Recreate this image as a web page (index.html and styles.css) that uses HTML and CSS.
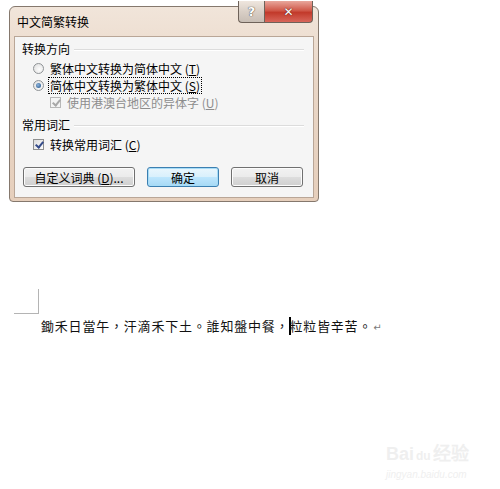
FILE: index.html
```html
<!DOCTYPE html>
<html lang="zh-CN">
<head>
  <meta charset="UTF-8" />
  <title>中文简繁转换</title>
  <link rel="stylesheet" href="styles.css">
</head>
<body>
  <div class="dialog">
    <div class="titlebar">
      <span class="title">中文简繁转换</span>
      <div class="caption-btns">
        <span class="cap-help">?</span>
        <span class="cap-close">✕</span>
      </div>
    </div>
    <div class="panel">
      <div class="group-head"><span>转换方向</span><i class="group-line"></i></div>
      <div class="row indent">
        <span class="radio"></span>
        <span class="label">繁体中文转换为简体中文 (<u>T</u>)</span>
      </div>
      <div class="row indent">
        <span class="radio on"></span>
        <span class="label focus">简体中文转换为繁体中文 (<u>S</u>)</span>
      </div>
      <div class="row indent2 disabled">
        <span class="check off"></span>
        <span class="label">使用港澳台地区的异体字 (<u>U</u>)</span>
      </div>
      <div class="group-head second"><span>常用词汇</span><i class="group-line"></i></div>
      <div class="row indent">
        <span class="check"></span>
        <span class="label">转换常用词汇 (<u>C</u>)</span>
      </div>
      <div class="buttons">
        <button class="btn wide">自定义词典 (<u>D</u>)...</button>
        <button class="btn default">确定</button>
        <button class="btn">取消</button>
      </div>
    </div>
  </div>

  <div class="doc">
    <div class="corner"></div>
    <p class="line" lang="zh-Hant-TW">鋤禾日當午，汗滴禾下土。誰知盤中餐，<span class="caret"></span>粒粒皆辛苦。<span class="para">↵</span></p>
  </div>

  <div class="watermark">
    <div class="wm-logo">Bai<span class="wm-paw">du</span>经验</div>
    <div class="wm-url">jingyan.baidu.com</div>
  </div>
</body>
</html>
```

FILE: styles.css
```css
body {
  margin: 0;
  background: #ffffff;
  font-family: "Noto Sans CJK SC", "Noto Sans", sans-serif;
  font-size: 12px;
  color: #000;
  position: relative;
  height: 489px;
  overflow: hidden;
}
.dialog {
  width: 310px;
  height: 196px;
  margin: 6px 0 0 9px;
  padding: 0 4px 3px 4px;
  box-sizing: border-box;
  background: linear-gradient(#f1e5da, #e9d6c6 40%, #e6cfbc);
  border: 1px solid #85786d;
  border-radius: 6px 6px 4px 4px;
  display: flex;
  flex-direction: column;
}
.titlebar {
  height: 29px;
  display: flex;
  justify-content: space-between;
  align-items: flex-start;
}
.title {
  margin: 8px 0 0 3px;
  line-height: 14px;
}
.caption-btns {
  display: flex;
  margin: -6px 1px 0 0;
}
.cap-help, .cap-close {
  height: 22px;
  box-sizing: border-box;
  border: 1px solid #6e6259;
  border-top: none;
  display: flex;
  align-items: center;
  justify-content: center;
  font-family: "DejaVu Sans", sans-serif;
  font-weight: bold;
}
.cap-help {
  width: 26px;
  border-radius: 0 0 0 4px;
  border-right: none;
  background: linear-gradient(#efe6de, #d9cfc6 50%, #c8beb5);
  color: #ffffff;
  font-size: 13px;
  text-shadow: 0 0 1px #4d4640, 0 0 1px #4d4640;
}
.cap-close {
  width: 49px;
  border-radius: 0 0 4px 0;
  background: linear-gradient(#e8a79c, #d0594a 45%, #c23a2b 55%, #d8665a);
  color: #ffffff;
  font-size: 12px;
  text-shadow: 0 0 1px #5a1a14, 0 0 1px #5a1a14;
}
.panel {
  flex: 1;
  background: #f5f5f5;
  border: 1px solid #b9a697;
  padding: 4px 7px 0 7px;
}
.group-head {
  display: flex;
  align-items: center;
  height: 16px;
  line-height: 16px;
}
.group-head.second {
  margin-top: 7px;
}
.group-line {
  flex: 1;
  height: 1px;
  margin: 1px 2px 0 4px;
  background: #dcdcdc;
  box-shadow: 0 1px 0 #ffffff;
}
.row {
  display: flex;
  align-items: center;
  height: 16px;
  margin-top: 1px;
}
.group-head + .row {
  margin-top: 3px;
}
.indent { padding-left: 11px; }
.indent2 { padding-left: 28px; }
.label {
  line-height: 15px;
  margin-left: 4px;
  padding: 0 1px;
  border: 1px solid transparent;
}
.label.focus {
  border: 1px dotted #000;
}
.radio {
  width: 11px;
  height: 11px;
  box-sizing: border-box;
  border-radius: 50%;
  border: 1px solid #8f9396;
  background: radial-gradient(circle at 60% 60%, #fdfdfd, #dcdcdc);
  position: relative;
}
.radio.on::after {
  content: "";
  position: absolute;
  left: 2px;
  top: 2px;
  width: 5px;
  height: 5px;
  border-radius: 50%;
  background: radial-gradient(circle at 40% 40%, #8fb6de, #1b4c83);
}
.check {
  width: 11px;
  height: 11px;
  box-sizing: border-box;
  border: 1px solid #8e8f8f;
  background: linear-gradient(135deg, #dcdcdc, #fdfdfd);
  position: relative;
}
.check::after {
  content: "";
  position: absolute;
  left: 3px;
  top: 0px;
  width: 3px;
  height: 6px;
  border: solid #344b8a;
  border-width: 0 2px 2px 0;
  transform: rotate(40deg);
}
.disabled .label {
  color: #8d8d8d;
}
.check.off {
  border-color: #b8b8b8;
  background: #f4f4f4;
}
.check.off::after {
  border-color: #a8a8a8;
}
.buttons {
  display: flex;
  gap: 12px;
  margin-top: 15px;
  padding-left: 1px;
}
.btn {
  width: 72px;
  height: 20px;
  padding: 0;
  font: inherit;
  color: #000;
  border: 1px solid #707070;
  border-radius: 3px;
  background: linear-gradient(#f2f2f2, #ebebeb 50%, #dddddd 51%, #cfcfcf);
  box-shadow: inset 0 0 0 1px #fcfcfc;
}
.btn.wide {
  width: 112px;
}
.btn.default {
  border-color: #3c7fb1;
  background: linear-gradient(#eaf6fd, #d9f0fc 50%, #bee6fd 51%, #a7d9f5);
  box-shadow: inset 0 0 0 1px #a6dcf7;
}
.doc {
  padding-top: 87px;
}
.corner {
  width: 24px;
  height: 24px;
  margin-left: 14px;
  border-right: 1px solid #b4b4b4;
  border-bottom: 1px solid #b4b4b4;
}
.line {
  margin: 3px 0 0 41px;
  font-family: "Noto Sans CJK TC", "Noto Sans", sans-serif;
  font-size: 13px;
  letter-spacing: 0.8px;
  line-height: 18px;
  color: #111;
}
.caret {
  display: inline-block;
  width: 2px;
  height: 18px;
  margin-right: -2px;
  background: #000;
  vertical-align: -4px;
}
.para {
  font-family: "DejaVu Sans", sans-serif;
  font-size: 10px;
  color: #7a7a7a;
  margin-left: 1px;
}
.watermark {
  position: absolute;
  left: 386px;
  top: 444px;
  color: #efefef;
  font-family: "Liberation Sans", sans-serif;
}
.wm-logo {
  font-size: 18px;
  font-weight: bold;
  line-height: 20px;
}
.wm-paw {
  font-size: 12px;
  margin: 0 2px;
}
.wm-url {
  font-size: 10px;
  font-style: italic;
  line-height: 14px;
  margin-top: 2px;
}
```
